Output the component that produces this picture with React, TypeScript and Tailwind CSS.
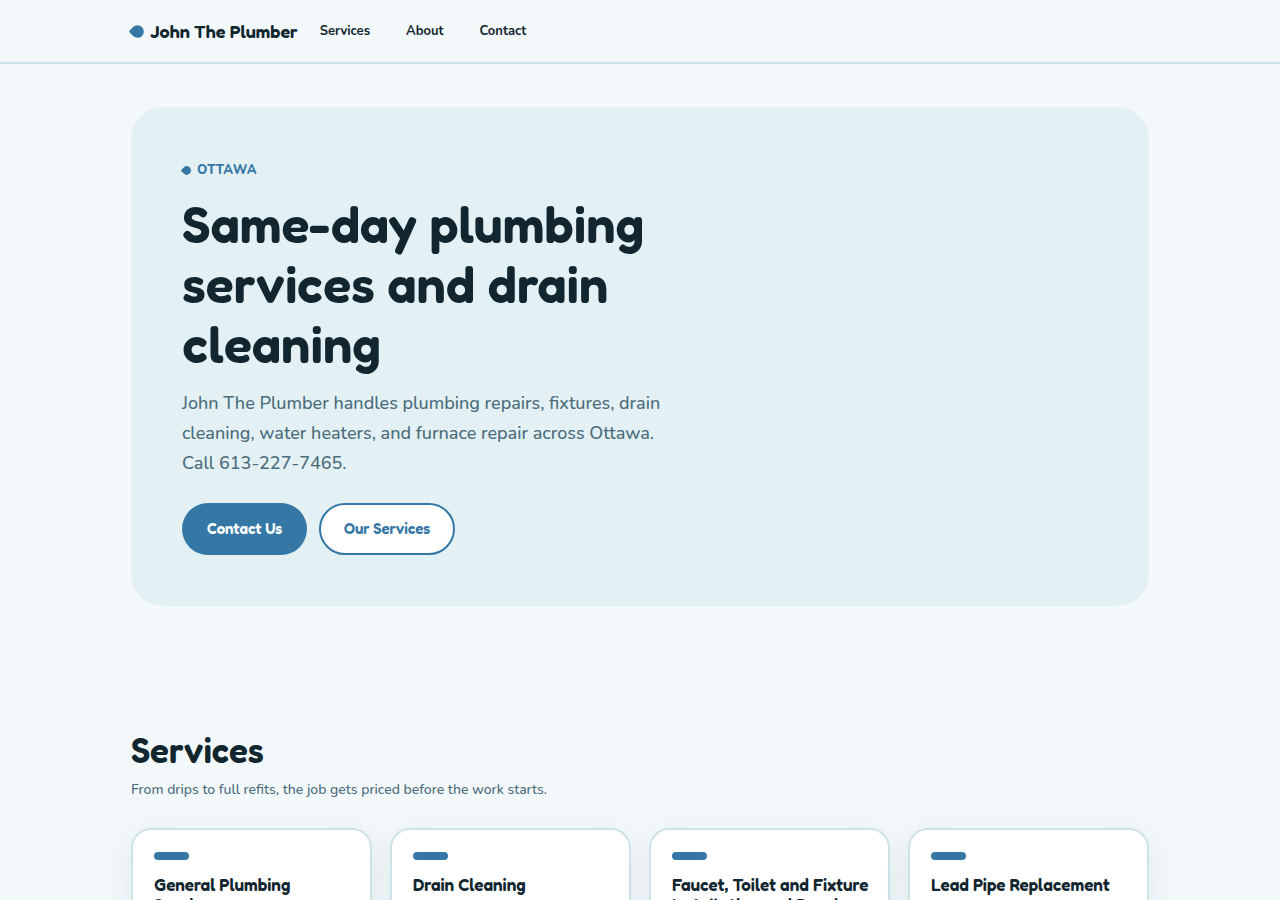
const services = [
  "General Plumbing Services",
  "Drain Cleaning",
  "Faucet, Toilet and Fixture Installation and Repair",
  "Lead Pipe Replacement",
];

const navLinks = [
  { label: "Services", href: "#services" },
  { label: "About", href: "#about" },
  { label: "Contact", href: "#contact" },
];

function Drop({ className }: { className: string }) {
  return (
    <svg viewBox="0 0 15 13" fill="currentColor" aria-hidden="true" className={className}>
      <path d="M0.4 5.8 L4.1 2 A6.3 6.3 0 1 1 4.1 11 L0.4 7.2 Q-0.3 6.5 0.4 5.8 Z" />
    </svg>
  );
}

function Header() {
  return (
    <header className="border-b-2 border-[#cbe1eb]">
      <div className="max-w-[1018px] mx-auto h-[62px] flex items-center">
        <a
          href="#top"
          className="flex items-center gap-1.5 -ml-0.5 mr-[22px] font-['Fredoka','Lato',sans-serif] text-lg leading-6 font-semibold"
        >
          <Drop className="w-[15px] h-[13px] text-[#3577a5]" />
          John The Plumber
        </a>
        <nav className="flex gap-9 text-[13px] leading-6 font-bold">
          {navLinks.map((link) => (
            <a key={link.label} href={link.href}>
              {link.label}
            </a>
          ))}
        </nav>
      </div>
    </header>
  );
}

function Hero() {
  return (
    <section className="max-w-[1018px] mx-auto mt-[43px] rounded-[32px] bg-[#e3f1f5] p-[51px]">
      <p className="flex items-center gap-1.5 -ml-px text-[13px] leading-6 font-extrabold tracking-wide uppercase text-[#3577a5]">
        <Drop className="w-2.5 h-[9px]" />
        Ottawa
      </p>
      <h1 className="mt-3 max-w-[500px] font-['Fredoka','Lato',sans-serif] text-[52px] leading-[60px] font-semibold">
        Same-day plumbing services and drain cleaning
      </h1>
      <p className="mt-3.5 max-w-[500px] text-[18px] leading-[30px] font-medium text-[#4b6c7b]">
        John The Plumber handles plumbing repairs, fixtures, drain cleaning, water heaters, and
        furnace repair across Ottawa. Call 613-227-7465.
      </p>
      <div className="mt-[25px] flex gap-3 font-['Fredoka','Lato',sans-serif] text-[15px] font-semibold">
        <button className="h-[52px] px-[25px] rounded-full bg-[#3577a5] text-white">Contact Us</button>
        <button className="h-[52px] px-[23px] rounded-full border-2 border-[#3577a5] bg-white text-[#3577a5]">
          Our Services
        </button>
      </div>
    </section>
  );
}

function Services() {
  return (
    <section id="services" className="max-w-[1018px] mx-auto pt-[122px]">
      <h2 className="font-['Fredoka','Lato',sans-serif] text-[35px] leading-[44px] font-semibold">Services</h2>
      <p className="mt-1.5 text-[14px] leading-6 font-medium text-[#4b6c7b]">
        From drips to full refits, the job gets priced before the work starts.
      </p>
      <div className="mt-[26px] grid grid-cols-4 gap-[18px]">
        {services.map((name) => (
          <article
            key={name}
            className="min-h-[160px] rounded-[20px] border-2 border-[#cde2e9] bg-white pl-[21px] pr-4 py-[22px] shadow-[0_8px_28px_rgba(20,40,50,0.08)]"
          >
            <div className="w-[35px] h-2 rounded-full bg-[#3577a5]" />
            <h3 className="mt-[15px] font-['Fredoka','Lato',sans-serif] text-[17px] leading-5 font-semibold">
              {name}
            </h3>
          </article>
        ))}
      </div>
    </section>
  );
}

export default function App() {
  return (
    <div id="top" className="h-screen overflow-hidden bg-[#f3f9fb] text-[#122630] font-['Nunito','Open_Sans',sans-serif]">
      <Header />
      <main>
        <Hero />
        <Services />
      </main>
    </div>
  );
}
